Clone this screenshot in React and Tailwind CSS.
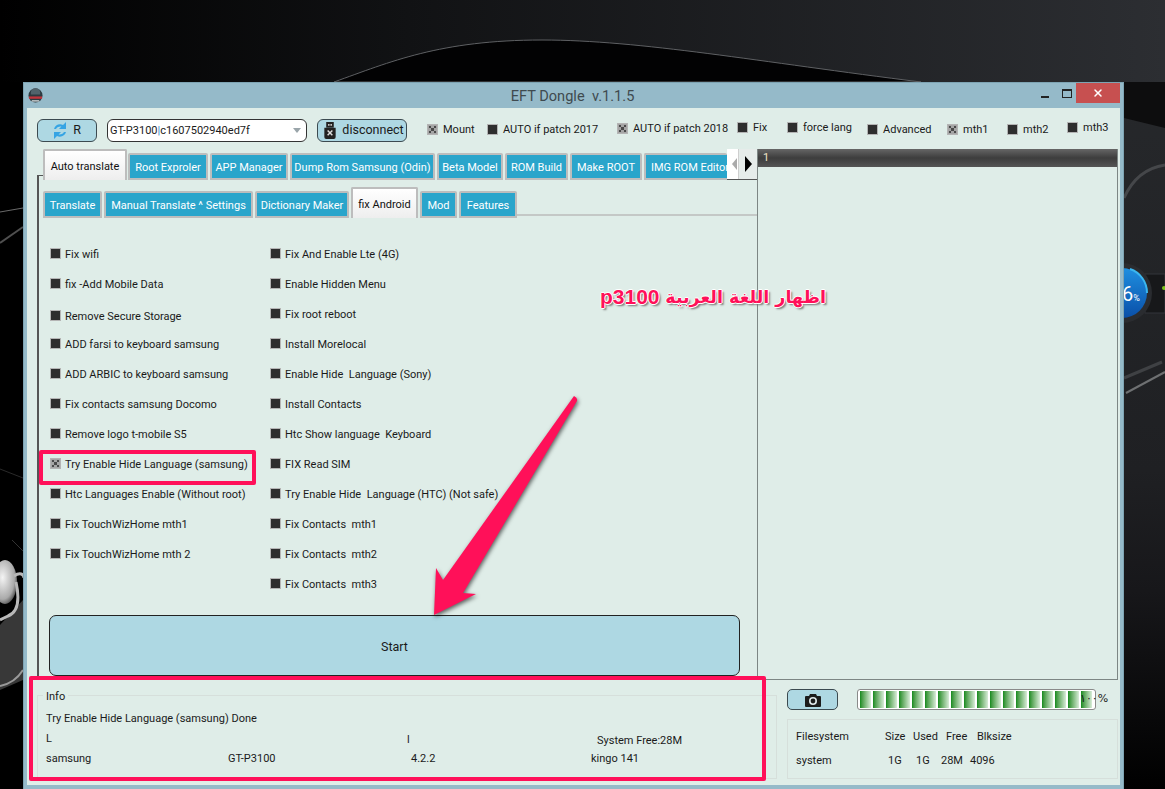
import React from 'react';
import { X } from 'lucide-react';

const topChecks = [
  { label: 'Mount', width: 'w-[60px]', on: true, shift: 'mt-[2px]' },
  { label: 'AUTO if patch 2017', width: 'w-[130px]', on: false, shift: 'mt-[2px]' },
  { label: 'AUTO if patch 2018', width: 'w-[120px]', on: true, shift: 'mt-[1px]' },
  { label: 'Fix', width: 'w-[50px]', on: false, shift: 'mt-0' },
  { label: 'force lang', width: 'w-[80px]', on: false, shift: 'mt-0' },
  { label: 'Advanced', width: 'w-[80px]', on: false, shift: 'mt-[2px]' },
  { label: 'mth1', width: 'w-[60px]', on: true, shift: 'mt-[2px]' },
  { label: 'mth2', width: 'w-[60px]', on: false, shift: 'mt-[2px]' },
  { label: 'mth3', width: 'w-[50px]', on: false, shift: 'mt-0' },
];

const mainTabs = [
  { label: 'Root Exproler', width: 'w-[80px]' },
  { label: 'APP Manager', width: 'w-[78px]' },
  { label: 'Dump Rom Samsung (Odin)', width: 'w-[145px]' },
  { label: 'Beta Model', width: 'w-[66px]' },
  { label: 'ROM Build', width: 'w-[63px]' },
  { label: 'Make ROOT', width: 'w-[72px]' },
  { label: 'IMG ROM Editor', width: 'w-[83px]', clip: true },
];

const subTabs = [
  { label: 'Translate', width: 'w-[59px]' },
  { label: 'Manual Translate ^ Settings', width: 'w-[149px]' },
  { label: 'Dictionary Maker', width: 'w-[94px]' },
  { label: 'fix Android', width: 'w-[67px]', active: true },
  { label: 'Mod', width: 'w-[37px]' },
  { label: 'Features', width: 'w-[58px]' },
];

const leftOptions = [
  { label: 'Fix wifi', h: 'h-[30px]' },
  { label: 'fix -Add Mobile Data', h: 'h-[32px]' },
  { label: 'Remove Secure Storage', h: 'h-[28px]' },
  { label: 'ADD farsi to keyboard samsung', h: 'h-[30px]' },
  { label: 'ADD ARBIC to keyboard samsung', h: 'h-[30px]' },
  { label: 'Fix contacts samsung Docomo', h: 'h-[30px]' },
  { label: 'Remove logo t-mobile S5', h: 'h-[30px]' },
  { label: 'Try Enable Hide Language (samsung)', h: 'h-[30px]', on: true },
  { label: 'Htc Languages Enable (Without root)', h: 'h-[30px]' },
  { label: 'Fix TouchWizHome mth1', h: 'h-[30px]' },
  { label: 'Fix TouchWizHome mth 2', h: 'h-[30px]' },
];

const rightOptions = [
  'Fix And Enable Lte (4G)',
  'Enable Hidden Menu',
  'Fix root reboot',
  'Install Morelocal',
  'Enable Hide  Language (Sony)',
  'Install Contacts',
  'Htc Show language  Keyboard',
  'FIX Read SIM',
  'Try Enable Hide  Language (HTC) (Not safe)',
  'Fix Contacts  mth1',
  'Fix Contacts  mth2',
  'Fix Contacts  mth3',
];

const CheckBox = ({ on }) => (
  <span className={`block w-[11px] h-[11px] shrink-0 border border-[#b4b4b4] ${on ? 'bg-[#a5a5a5]' : 'bg-[#2e2e2e]'}`}>
    {on && (
      <svg viewBox="0 0 9 9" className="w-full h-full block">
        <path d="M1 1h2v2H1zM6 1h2v2H6zM1 6h2v2H1zM6 6h2v2H6zM3 3h3v3H3z" fill="#4a4a4a" />
      </svg>
    )}
  </span>
);

const Option = ({ label, on, h = 'h-[30px]' }) => (
  <div className={`flex items-start gap-[4px] ${h}`}>
    <CheckBox on={on} />
    <span className="mt-[1px] leading-[12px] whitespace-pre">{label}</span>
  </div>
);

const Tab = ({ label, width, active, clip }) =>
  active ? (
    <div className={`${width} h-[31px] shrink-0 flex items-center justify-center pt-[4px] bg-gradient-to-b from-white to-[#eeeeee] border-2 border-b-0 border-[#bdbdbd] rounded-t-[2px] text-[#111] whitespace-nowrap`}>
      {label}
    </div>
  ) : (
    <div className={`${width} h-[27px] shrink-0 flex items-center pt-[3px] ${clip ? 'justify-start pl-[5px] border-r-0' : 'justify-center border-r-2'} bg-[#2aa5cb] border-l-2 border-y-2 border-[#bdbdbd] rounded-t-[2px] text-white whitespace-nowrap overflow-hidden`}>
      {label}
    </div>
  );

// the blurred wallpaper behind the window
const Backdrop = () => (
  <svg viewBox="0 0 1165 789" className="absolute inset-0 w-[1165px] h-[789px]">
    <defs>
      <linearGradient id="sweep" x1="0" y1="0" x2="1" y2="0">
        <stop offset="0" stopColor="#000000" />
        <stop offset="0.35" stopColor="#111214" />
        <stop offset="1" stopColor="#2c2e32" />
      </linearGradient>
      <linearGradient id="rightFade" x1="0" y1="0" x2="0" y2="1">
        <stop offset="0" stopColor="#26282b" />
        <stop offset="0.55" stopColor="#1f2023" />
        <stop offset="0.72" stopColor="#17171a" />
        <stop offset="1" stopColor="#000000" />
      </linearGradient>
      <radialGradient id="blob" cx="0.4" cy="0.4" r="0.7">
        <stop offset="0" stopColor="#f4f4f4" />
        <stop offset="0.7" stopColor="#aaaaaa" />
        <stop offset="1" stopColor="#333333" />
      </radialGradient>
      <linearGradient id="gauge" x1="0" y1="0" x2="0" y2="1">
        <stop offset="0" stopColor="#1f8fe0" />
        <stop offset="1" stopColor="#0a4fa8" />
      </linearGradient>
    </defs>
    <rect width="1165" height="789" fill="url(#sweep)" />
    <path d="M334 82C390 62 440 40 542 40C640 40 760 62 921 82Z" fill="#020203" stroke="#5e6063" strokeWidth="1" />
    <rect x="0" y="82" width="26" height="707" fill="#000" />
    <rect x="1120" y="82" width="45" height="707" fill="url(#rightFade)" />
    <path d="M1124 118L1165 128V82H1124Z" fill="#0d0d0e" />

    {/* left edge */}
    <path d="M0 212L23 208" stroke="#6a6a6a" strokeWidth="1" />
    <path d="M0 243L23 227" stroke="#4f4f4f" strokeWidth="2" />
    <path d="M0 469L23 478" stroke="#2a2a2a" strokeWidth="1" />
    <path d="M12 540L23 551" stroke="#333" strokeWidth="1" />
    <path d="M0 625L23 600V680L0 690Z" fill="#383838" />
    <ellipse cx="5" cy="582" rx="12" ry="22" fill="url(#blob)" />
    <path d="M14 576C20 572 24 574 24 578M16 582C20 600 18 612 8 616L0 620" stroke="#b8b8b8" strokeWidth="3" fill="none" />
    <path d="M0 686C10 684 18 678 23 670" stroke="#9a9a9a" strokeWidth="2" fill="none" />

    {/* right edge */}
    <path d="M1124 198C1132 180 1145 168 1165 165" stroke="#45474a" strokeWidth="3" fill="none" />
    <rect x="1145" y="274" width="20" height="39" fill="#17181a" stroke="#33353a" strokeWidth="1" />
    <circle cx="1164" cy="288" r="2" fill="#7fc31c" />
    <circle cx="1122" cy="293" r="30" fill="#2a2c30" />
    <circle cx="1122" cy="293" r="25" fill="url(#gauge)" />
    <path d="M1130 269A25 25 0 0 1 1147 293" stroke="#3bb6ef" strokeWidth="2" fill="none" />
    <path d="M1126 393L1165 372" stroke="#6e7072" strokeWidth="2" />
    <path d="M1124 378L1162 362" stroke="#3f4144" strokeWidth="3" />
  </svg>
);

const App = () => (
  <div
    className="relative w-[1165px] h-[789px] overflow-hidden bg-black pt-[82px] pl-[23px] text-[11px] text-[#1a1a1a]"
    style={{ fontFamily: 'Roboto, "Liberation Sans", sans-serif' }}
  >
    <Backdrop />

    <span className="absolute left-[1122px] top-[284px] text-white text-[20px] leading-[20px]">6<span className="text-[9px]">%</span></span>

    {/* Window */}
    <div className="relative w-[1101px] h-[707px] flex flex-col bg-[#95bac9] border border-[#7ea4b3] border-b-0 pl-[3px] pr-[3px] pb-[4px]">
      {/* Title bar */}
      <div className="h-[25px] shrink-0 flex items-center">
        <svg viewBox="0 0 16 16" className="w-[15px] h-[15px] ml-[1px]">
          <circle cx="8" cy="8" r="7.5" fill="#2c3a40" />
          <path d="M3 5a5 5 0 0 1 10 0v2H3z" fill="#51636b" />
          <path d="M1 9h14v2.5H1z" fill="#c0343c" />
          <path d="M4 13h8v1.5H4z" fill="#cfd6d8" />
        </svg>
        <div className="flex-1 text-center text-[14.6px] leading-[14px] text-[#3f4a4f] whitespace-pre pl-[70px]">EFT Dongle  v.1.1.5</div>
        <div className="flex items-start h-full">
          <div className="w-[26px] flex justify-center pt-[13px]"><span className="block w-[8px] h-[2px] bg-[#222]" /></div>
          <div className="w-[18px] flex justify-center pt-[6px]"><span className="block w-[10px] h-[9px] border border-t-2 border-[#222]" /></div>
          <div className="w-[44px] h-[20px] bg-[#c75050] flex items-center justify-center"><X size={12} strokeWidth={3} className="text-white" /></div>
        </div>
      </div>

      {/* Client area */}
      <div className="flex-1 min-h-0 flex flex-col bg-[#dfede8]">
        {/* Toolbar */}
        <div className="h-[41px] shrink-0 flex pt-[11px] pl-[10px]">
          <button className="w-[60px] h-[23px] flex items-center justify-center gap-[6px] bg-[#aed8e3] border border-[#3c4a50] rounded-[6px] text-[12.5px]">
            <svg viewBox="0 0 14 17" className="w-[14px] h-[17px]">
              <path d="M13 0v7H6l2.4-2.4C6.6 4.2 4.4 4.8 3 7H1c1-3.6 5-6 9-4z" fill="#35a4e4" />
              <path d="M1 17v-7h7l-2.4 2.4c1.8.4 4-.2 5.4-2.4h2c-1 3.6-5 6-9 4z" fill="#35a4e4" />
            </svg>
            R
          </button>
          <div className="ml-[10px] w-[200px] h-[23px] flex items-center justify-between bg-white border border-[#333] rounded-[6px] pl-[2px] pr-[4px] leading-[14px]">
            <span>GT-P3100<span className="text-[#3b82c4]">|</span>c1607502940ed7f</span>
            <span className="block w-0 h-0 border-x-[4px] border-x-transparent border-t-[5px] border-t-[#9aa5aa] mr-[1px]" />
          </div>
          <button className="ml-[10px] w-[90px] h-[23px] flex items-center justify-center gap-[6px] pl-[4px] bg-[#aed8e3] border border-[#3c4a50] rounded-[6px] text-[12.5px]">
            <svg viewBox="0 0 12 18" className="w-[12px] h-[17px]">
              <path d="M2 0h8v6H2z" fill="#222" />
              <path d="M4 2h1.5v2H4zM6.5 2H8v2H6.5z" fill="#ddd" />
              <path d="M0 6h12v10a2 2 0 0 1-2 2H2a2 2 0 0 1-2-2z" fill="#222" />
              <path d="M3.5 9l5 5M8.5 9l-5 5" stroke="#ddd" strokeWidth="1.6" />
            </svg>
            disconnect
          </button>
          <div className="ml-[20px] flex items-start pt-[3px]">
            {topChecks.map((c) => (
              <div key={c.label} className={`${c.width} ${c.shift} flex items-start gap-[5px]`}>
                <CheckBox on={c.on} />
                <span className="leading-[12px] whitespace-nowrap">{c.label}</span>
              </div>
            ))}
          </div>
        </div>

        {/* Panels */}
        <div className="flex flex-1 min-h-0">
          {/* Left side */}
          <div className="w-[730px] shrink-0 flex flex-col">
            <div className="h-[527px] shrink-0 flex flex-col">
              {/* Main tabs */}
              <div className="h-[31px] shrink-0 flex items-end pl-[16px]">
                <div className="mr-[1px]"><Tab label="Auto translate" width="w-[84px]" active /></div>
                <div className="flex gap-[2px] items-end">
                  {mainTabs.map((t) => <Tab key={t.label} {...t} />)}
                </div>
                <div className="w-[30px] h-[31px] shrink-0 flex bg-white border-b border-[#555]">
                  <div className="w-[11px] flex items-center justify-end pr-[1px]">
                    <span className="block w-0 h-0 border-y-[6px] border-y-transparent border-r-[5px] border-r-[#aaaaaa]" />
                  </div>
                  <div className="flex-1 flex items-center justify-center bg-[#e6ecea] border-l border-[#cfcfcf]">
                    <span className="block w-0 h-0 border-y-[8px] border-y-transparent border-l-[7px] border-l-black" />
                  </div>
                </div>
              </div>
              {/* Tab page */}
              <div className="flex-1 min-h-0 ml-[10px] -mt-[5px] pt-[5px] border-l-2 border-[#555] flex flex-col relative">
                <span className="absolute left-0 top-0 w-[4px] h-[1px] bg-[#555]" />
                <div className="h-[38px] shrink-0 flex items-end pl-[4px]">
                  <div className="flex gap-[2px] items-end">
                    {subTabs.map((t) => <Tab key={t.label} {...t} />)}
                  </div>
                  <div className="flex-1 h-[2px] mb-[2px] bg-[#c4c8c6]" />
                </div>
                <div className="flex pt-[30px] pl-[11px]">
                  <div className="w-[220px]">
                    {leftOptions.map((o) => <Option key={o.label} {...o} />)}
                  </div>
                  <div>
                    {rightOptions.map((label) => <Option key={label} label={label} />)}
                  </div>
                </div>
                <div className="mt-auto ml-[10px] mr-[17px] h-[61px] shrink-0 flex items-center justify-center pt-[4px] bg-[#aed8e3] border border-[#222] rounded-[7px] text-[12.5px]">
                  Start
                </div>
              </div>
            </div>
            {/* Info group */}
            <div className="relative mt-[19px] ml-[10px] w-[740px] h-[84px] border border-[#d6dfdb]">
              <span className="absolute left-[5px] -top-[5px] px-[3px] bg-[#dfede8] leading-[12px]">Info</span>
              <div className="pt-[16px] pl-[8px] leading-[13px]">
                <div>Try Enable Hide Language (samsung) Done</div>
                <div className="mt-[7px] grid grid-cols-[361px_190px_1fr]">
                  <span>L</span>
                  <span className="mt-[1px]">l</span>
                  <span className="mt-[2px]">System Free:28M</span>
                </div>
                <div className="mt-[5px] grid grid-cols-[182px_183px_180px_1fr]">
                  <span>samsung</span>
                  <span>GT-P3100</span>
                  <span>4.2.2</span>
                  <span>kingo 141</span>
                </div>
              </div>
            </div>
          </div>

          {/* Right side */}
          <div className="w-[361px] flex flex-col">
            <div className="h-[531px] shrink-0 flex flex-col border border-[#7d8684] border-t-0">
              <div className="h-[18px] shrink-0 flex items-center pl-[5px] bg-gradient-to-b from-[#666] via-[#3d3d3d] to-[#555] text-[#eee3c8] leading-[12px]">1</div>
            </div>
            <div className="flex items-center pt-[9px] pl-[30px]">
              <button className="w-[51px] h-[21px] flex items-center justify-center bg-[#aed8e3] border border-[#3c4a50] rounded-[5px]">
                <svg viewBox="0 0 16 14" className="w-[16px] h-[14px]">
                  <path d="M5 1h6l1 2h3a1 1 0 0 1 1 1v9a1 1 0 0 1-1 1H1a1 1 0 0 1-1-1V4a1 1 0 0 1 1-1h3z" fill="#1c1c1c" />
                  <circle cx="8" cy="8" r="4" fill="#dfe8ea" />
                  <circle cx="8" cy="8" r="2.4" fill="#1c1c1c" />
                </svg>
              </button>
              <div className="relative ml-[19px] w-[239px] h-[21px] flex items-center bg-white border border-[#8a8a8a] rounded-[3px] pl-[2px]">
                <div className="flex gap-[2px]">
                  {Array.from({ length: 18 }).map((_, i) => (
                    <span key={i} className="block w-[11px] h-[17px] bg-gradient-to-r from-[#0b8a1a] to-[#d8ecd8]" />
                  ))}
                </div>
                <span className="absolute left-[222px] top-[3px] leading-[12px] whitespace-nowrap" style={{ fontFamily: '"DejaVu Sans", sans-serif' }}>١٠٠%</span>
              </div>
            </div>
            <div className="mt-[9px] ml-[30px] w-[331px] h-[60px] border border-[#d6dfdb] pl-[8px] pt-[10px] leading-[13px]">
              <div className="grid grid-cols-[89px_28px_33px_31px_1fr]">
                <span>Filesystem</span><span>Size</span><span>Used</span><span>Free</span><span>Blksize</span>
              </div>
              <div className="mt-[11px] grid grid-cols-[92px_28px_25px_29px_1fr]">
                <span>system</span><span>1G</span><span>1G</span><span>28M</span><span>4096</span>
              </div>
            </div>
          </div>
        </div>
      </div>
    </div>

    {/* Screenshot annotations */}
    <div className="absolute left-[39px] top-[450px] w-[217px] h-[35px] border-4 border-[#ff1059] rounded-[2px]" />
    <div className="absolute left-[29px] top-[676px] w-[737px] h-[105px] border-4 border-[#ff1059] rounded-[2px]" />
    <svg viewBox="0 0 1165 789" className="absolute inset-0 w-[1165px] h-[789px] pointer-events-none drop-shadow-[1px_2px_2px_rgba(0,0,0,0.6)]">
      <path d="M574 396Q578 398 577 401L463 593L476 594L434 615L436 568L443 580Z" fill="#ff1059" />
    </svg>
    <div
      dir="ltr"
      className="absolute left-[600px] top-[284px] w-[226px] flex items-center justify-between whitespace-nowrap font-bold leading-[26px] text-[#ff1059] [text-shadow:1px_0_0_#fff,-1px_0_0_#fff,0_1px_0_#fff,0_-1px_0_#fff,2px_2px_2px_#777]"
    >
      <span className="text-[21px]" style={{ fontFamily: '"Liberation Sans", sans-serif' }}>p3100</span>
      <span dir="rtl" className="text-[17.5px]" style={{ fontFamily: '"DejaVu Sans", sans-serif' }}>اظهار اللغة العربية</span>
    </div>
  </div>
);

export default App;
